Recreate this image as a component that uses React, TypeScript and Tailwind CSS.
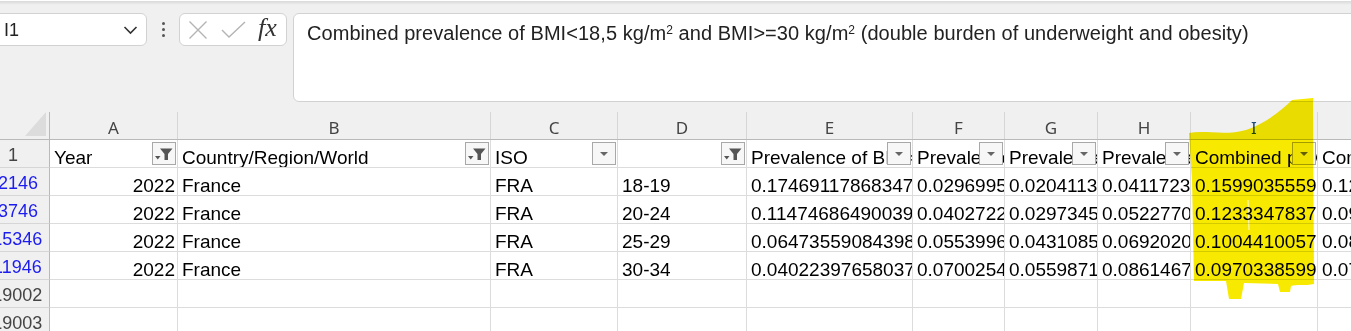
import React from "react";

type Col = {
  letter: string;
  width: number;
  title: string;
  filter: "funnel" | "arrow" | "none";
};

const cols: Col[] = [
  { letter: "A", width: 128, title: "Year", filter: "funnel" },
  { letter: "B", width: 313, title: "Country/Region/World", filter: "funnel" },
  { letter: "C", width: 127, title: "ISO", filter: "arrow" },
  { letter: "D", width: 129, title: "", filter: "funnel" },
  { letter: "E", width: 166, title: "Prevalence of BMI<18,5 kg/m²", filter: "arrow" },
  { letter: "F", width: 92, title: "Prevalence of BMI>=30", filter: "arrow" },
  { letter: "G", width: 93, title: "Prevalence of BMI>=35", filter: "arrow" },
  { letter: "H", width: 93, title: "Prevalence of BMI>=25", filter: "arrow" },
  { letter: "I", width: 127, title: "Combined prevalence", filter: "arrow" },
  { letter: "J", width: 127, title: "Combined prevalence", filter: "none" },
];

type Row = { num: string; filtered: boolean; cells: string[] };

const rows: Row[] = [
  {
    num: "12146",
    filtered: true,
    cells: ["2022", "France", "FRA", "18-19", "0.174691178683471", "0.029699512", "0.020411356", "0.041172312", "0.159903555912", "0.12345"],
  },
  {
    num: "13746",
    filtered: true,
    cells: ["2022", "France", "FRA", "20-24", "0.114746864900391", "0.040272234", "0.029734512", "0.052277041", "0.123334783712", "0.09876"],
  },
  {
    num: "115346",
    filtered: true,
    cells: ["2022", "France", "FRA", "25-29", "0.064735590843982", "0.055399641", "0.043108523", "0.069202017", "0.100441005712", "0.08765"],
  },
  {
    num: "111946",
    filtered: true,
    cells: ["2022", "France", "FRA", "30-34", "0.040223976580371", "0.070025412", "0.055987104", "0.086146741", "0.097033859912", "0.07654"],
  },
  { num: "119002", filtered: false, cells: ["", "", "", "", "", "", "", "", "", ""] },
  { num: "119003", filtered: false, cells: ["", "", "", "", "", "", "", "", "", ""] },
];

function FilterButton({ kind }: { kind: "funnel" | "arrow" }) {
  return (
    <div className="absolute right-[1px] top-[2px] w-[24px] h-[23px] border border-[#a8a8a8] bg-[#f7f7f7] flex items-center justify-center">
      {kind === "funnel" ? (
        <svg width="20" height="16" viewBox="0 0 20 16">
          <path d="M1 10 L6.5 10 L3.75 13.5 Z" fill="#555" />
          <path d="M6 2.5 L18.5 2.5 L14 8 L14 14 L10.5 14 L10.5 8 Z" fill="#555" />
        </svg>
      ) : (
        <svg width="10" height="6" viewBox="0 0 10 6">
          <path d="M1 1 L9 1 L5 5 Z" fill="#666" />
        </svg>
      )}
    </div>
  );
}

function RowHeader({ text, color }: { text: string; color: string }) {
  return (
    <div className="w-[50px] shrink-0 h-full overflow-hidden flex bg-[#f0f0f0] border-r border-r-[#b9b9b9] border-b border-b-[#d6d6d6]">
      <div
        className={`w-[26px] shrink-0 flex justify-center items-end leading-[20px] pb-[2px] whitespace-nowrap text-[18px] ${color}`}
      >
        {text}
      </div>
    </div>
  );
}

export default function App() {
  return (
    <div
      className="relative w-[1351px] h-[331px] overflow-hidden bg-[#f0f0f0]"
      style={{ fontFamily: '"Liberation Sans", Arial, sans-serif' }}
    >
      {/* toolbar / formula bar */}
      <div className="h-[112px] relative">
        <div className="h-[1px] bg-white" />
        <div className="h-[4px] bg-gradient-to-b from-[#d9d9d9] to-[#f0f0f0]" />
        <div className="flex items-start pt-[8px]">
          {/* name box */}
          <div className="ml-[-6px] w-[153px] h-[33px] bg-white border border-[#d2d2d2] rounded-[6px] flex items-center justify-between pl-[9px] pr-[8px]">
            <span className="text-[18px] text-[#222] leading-none">I1</span>
            <svg width="15" height="10" viewBox="0 0 15 10">
              <path d="M1.5 2 L7.5 8 L13.5 2" fill="none" stroke="#333" strokeWidth="1.6" />
            </svg>
          </div>
          {/* dots */}
          <div className="w-[32px] h-[33px] flex flex-col items-center justify-center gap-[3px]">
            <div className="w-[3px] h-[3px] rounded-full bg-[#555]" />
            <div className="w-[3px] h-[3px] rounded-full bg-[#555]" />
            <div className="w-[3px] h-[3px] rounded-full bg-[#555]" />
          </div>
          {/* cancel / enter / fx */}
          <div className="w-[108px] h-[33px] bg-white border border-[#d2d2d2] rounded-[6px] flex items-center pl-[8px]">
            <svg width="20" height="18" viewBox="0 0 20 18">
              <path d="M1.5 0.5 L18.5 17.5 M18.5 0.5 L1.5 17.5" stroke="#b4b4b4" strokeWidth="1.4" />
            </svg>
            <svg className="ml-[13px]" width="25" height="17" viewBox="0 0 25 17">
              <path d="M1 9 L8 16 L24 1" fill="none" stroke="#b4b4b4" strokeWidth="1.4" />
            </svg>
            <span
              className="ml-[12px] text-[26px] italic text-[#333] leading-none -mt-[3px]"
              style={{ fontFamily: '"Liberation Serif", "Times New Roman", serif' }}
            >
              fx
            </span>
          </div>
          {/* formula text */}
          <div className="ml-[6px] flex-1 h-[89px] -mr-[20px] bg-white border border-[#d2d2d2] rounded-[6px] pl-[13px] pt-[8px]">
            <div className="text-[20px] leading-[23px] text-[#222] whitespace-nowrap tracking-[0.05px]">
              Combined prevalence of BMI&lt;18,5 kg/m<sup className="text-[12px]">2</sup> and BMI&gt;=30 kg/m
              <sup className="text-[12px]">2</sup> (double burden of underweight and obesity)
            </div>
          </div>
        </div>
      </div>

      {/* column letters */}
      <div className="flex h-[28px] border-b border-b-[#b9b9b9]">
        <div className="w-[50px] shrink-0 border-r border-r-[#b9b9b9] flex items-end justify-end pr-[3px] pb-[3px]">
          <svg width="21" height="24" viewBox="0 0 21 24">
            <path d="M21 0 L21 24 L0 24 Z" fill="#dcdcdc" />
          </svg>
        </div>
        {cols.map((c) => (
          <div
            key={c.letter}
            className="shrink-0 border-r border-r-[#d6d6d6] flex items-end justify-center pb-[1px] text-[17px] leading-[21px]"
            style={{ width: c.width, fontFamily: '"Noto Sans", "Open Sans", sans-serif' }}
          >
            <span className={c.letter === "I" ? "text-[#1f4e79]" : "text-[#444]"}>{c.letter}</span>
          </div>
        ))}
      </div>

      {/* header row 1 */}
      <div className="flex h-[28px] bg-white">
        <RowHeader text="1" color="text-[#444]" />
        {cols.map((c) => (
          <div
            key={c.letter}
            className="relative shrink-0 h-full border-r border-b border-[#dcdcdc] overflow-hidden flex items-end pl-[4px] whitespace-nowrap text-[19px] leading-[18px] text-black"
            style={{ width: c.width }}
          >
            {c.title}
            {c.filter !== "none" && <FilterButton kind={c.filter} />}
          </div>
        ))}
      </div>

      {/* data rows */}
      {rows.map((r) => (
        <div key={r.num} className="flex h-[28px] bg-white">
          <RowHeader text={r.num} color={r.filtered ? "text-[#1c1cf0]" : "text-[#444]"} />
          {cols.map((c, i) => (
            <div
              key={c.letter}
              className={`shrink-0 h-full border-r border-b border-[#dcdcdc] overflow-hidden flex items-end whitespace-nowrap text-[19px] leading-[18px] text-black ${
                i === 0 ? "justify-end pr-[2px]" : "pl-[4px]"
              }`}
              style={{ width: c.width }}
            >
              {r.cells[i]}
            </div>
          ))}
        </div>
      ))}

      {/* yellow highlighter scribble */}
      <svg
        className="absolute left-0 top-0 pointer-events-none mix-blend-multiply"
        width="1351"
        height="331"
        viewBox="0 0 1351 331"
      >
        <path
          d="M1189 133 C1205 130 1226 136 1246 130 C1264 124 1280 112 1292 100 L1313 98 L1314 284 C1305 286 1296 284 1291 286 L1290 292 L1280 292 L1278 284 L1244 283 L1241 299 L1229 299 L1226 281 L1194 281 L1192 180 L1190 150 Z"
          fill="#f7ea00"
        />
        <path d="M1248 200 L1249 230" stroke="#fffbd0" strokeWidth="1" />
      </svg>
    </div>
  );
}
